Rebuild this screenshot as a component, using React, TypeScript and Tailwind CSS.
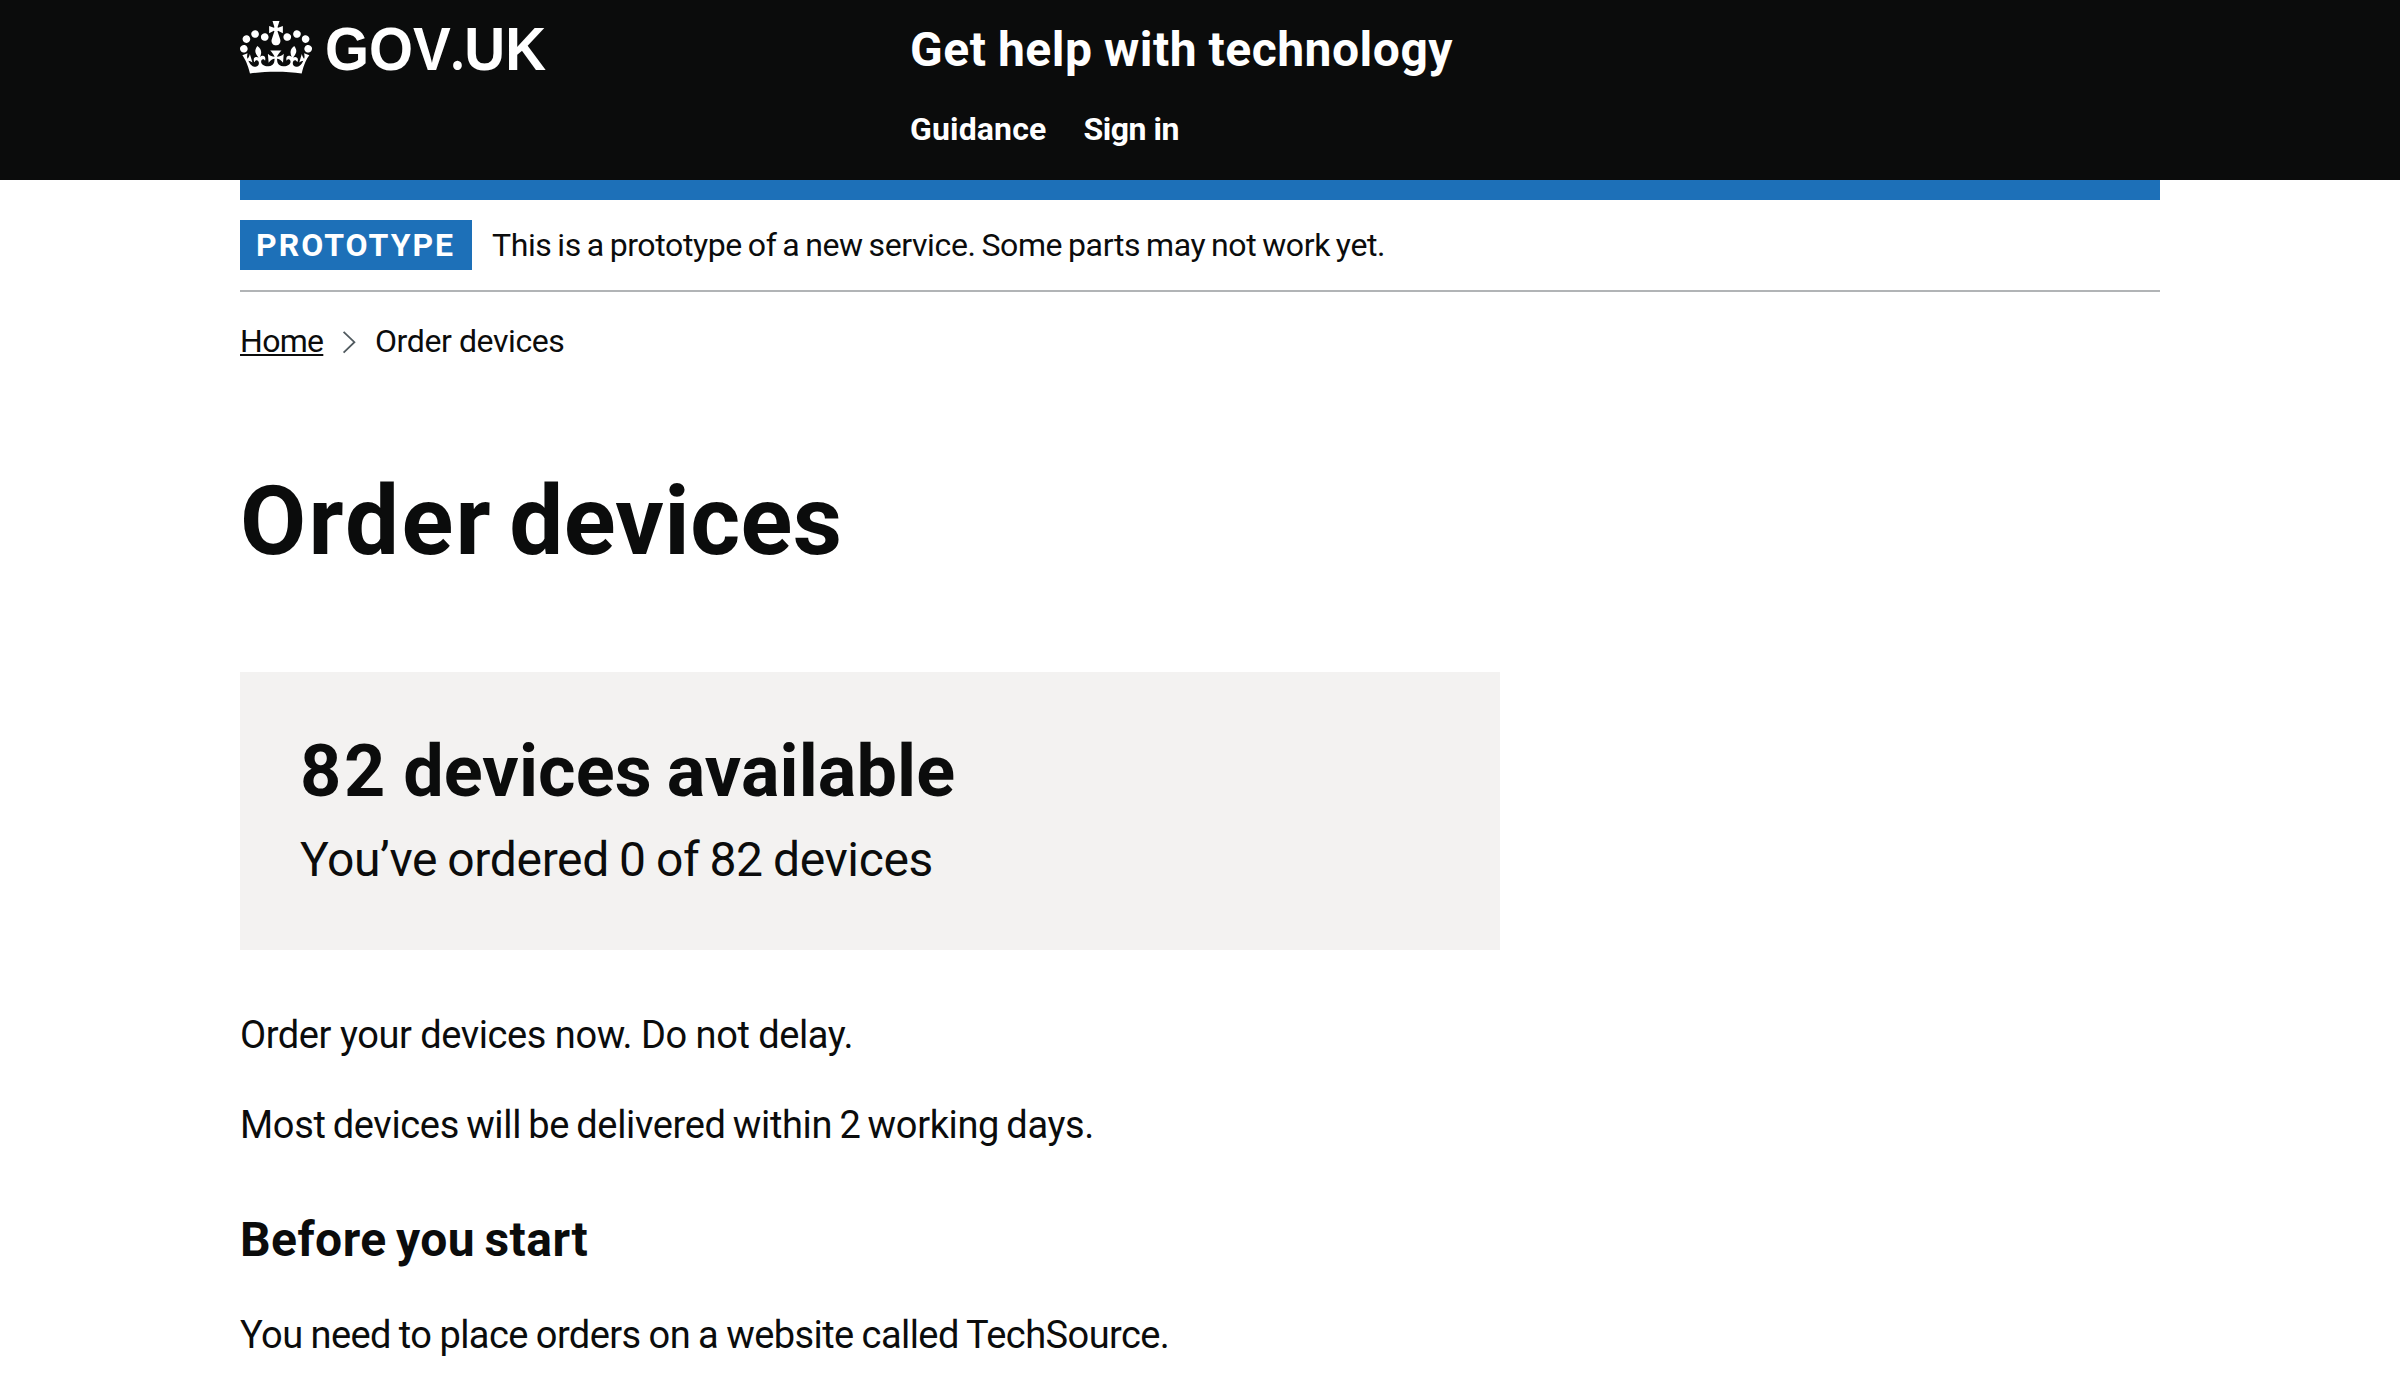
function Crown() {
  return (
    <svg className="mt-[21px] h-[53px] w-[72px] shrink-0" viewBox="0 0 132 97" fill="currentColor" aria-hidden="true">
      <path
        fillRule="evenodd"
        d="M25 30.2c3.5 1.5 7.7-.2 9.1-3.7 1.5-3.6-.2-7.8-3.9-9.2-3.6-1.4-7.6.3-9.1 3.9-1.4 3.5.3 7.5 3.9 9zM9 39.5c3.6 1.5 7.8-.2 9.2-3.7 1.5-3.6-.2-7.8-3.9-9.1-3.6-1.5-7.6.2-9.1 3.8-1.4 3.5.3 7.5 3.8 9zM4.4 57.2c3.5 1.5 7.7-.2 9.1-3.8 1.5-3.6-.2-7.7-3.9-9.1-3.5-1.5-7.6.3-9.1 3.8-1.4 3.5.3 7.6 3.9 9.1zm38.3-21.4c3.5 1.5 7.7-.2 9.1-3.8 1.5-3.6-.2-7.7-3.9-9.1-3.6-1.5-7.6.3-9.1 3.8-1.3 3.6.4 7.7 3.9 9.1zm64.4-5.6c-3.6 1.5-7.8-.2-9.1-3.7-1.5-3.6.2-7.8 3.8-9.2 3.6-1.4 7.7.3 9.2 3.9 1.3 3.5-.4 7.5-3.9 9zm15.9 9.3c-3.6 1.5-7.7-.2-9.1-3.7-1.5-3.6.2-7.8 3.7-9.1 3.6-1.5 7.7.2 9.2 3.8 1.5 3.5-.3 7.5-3.8 9zm4.7 17.7c-3.6 1.5-7.8-.2-9.2-3.8-1.5-3.6.2-7.7 3.9-9.1 3.6-1.5 7.7.3 9.2 3.8 1.3 3.5-.4 7.6-3.9 9.1zM89.3 35.8c-3.6 1.5-7.8-.2-9.2-3.8-1.4-3.6.2-7.7 3.9-9.1 3.6-1.5 7.7.3 9.2 3.8 1.4 3.6-.3 7.7-3.9 9.1zM69.7 17.7l8.9 4.7V9.3l-8.9 2.8c-.2-.3-.5-.6-.9-.9L72.4 0H59.6l3.5 11.2c-.3.3-.6.5-.9.9l-8.8-2.8v13.1l8.8-4.7c.3.3.6.7.9.9l-5 15.4v.1c-.2.8-.4 1.6-.4 2.4 0 4.1 3.1 7.5 7 8.1h.2c.3 0 .7.1 1 .1.4 0 .7 0 1-.1h.2c4-.6 7.1-4.1 7.1-8.1 0-.8-.1-1.7-.4-2.4V34l-5.1-15.4c.4-.2.7-.6 1-.9zM66 92.8c16.9 0 32.8 1.1 47.1 3.2 4-16.9 8.9-26.7 14-33.5l-9.6-3.4c1 4.9 1.1 7.2 0 10.2-1.5-1.4-3-4.3-4.2-8.7L108.6 76c2.8-2 5-3.2 7.5-3.3-4.4 9.4-10 11.9-13.6 11.2-4.3-.8-6.3-4.6-5.6-7.9 1-4.7 5.7-5.9 8-.5 4.3-8.7-3-11.4-7.6-8.8 7.1-7.2 7.9-13.5 2.1-21.1-8 6.1-8.1 12.3-4.5 20.8-4.7-5.4-12.1-2.5-9.5 6.2 3.4-5.2 7.9-2 7.2 3.1-.6 4.3-6.4 7.8-13.5 7.2-10.3-.9-10.9-8-11.2-13.8 2.5-.5 7.1 1.8 11 7.3L80.2 60c-4.1 4.4-8 5.3-12.3 5.4 1.4-4.4 8-11.6 8-11.6H55.5s6.4 7.2 7.9 11.6c-4.2-.1-8-1-12.3-5.4l1.4 16.4c3.9-5.5 8.5-7.7 10.9-7.3-.3 5.8-.9 12.8-11.1 13.8-7.2.6-12.9-2.9-13.5-7.2-.7-5 3.8-8.3 7.1-3.1 2.7-8.7-4.6-11.6-9.4-6.2 3.7-8.5 3.6-14.7-4.6-20.8-5.8 7.6-5 13.9 2.2 21.1-4.7-2.6-11.9.1-7.7 8.8 2.3-5.5 7.1-4.2 8.1.5.7 3.3-1.3 7.1-5.7 7.9-3.5.7-9-1.8-13.5-11.2 2.5.1 4.7 1.3 7.5 3.3l-4.7-15.4c-1.2 4.4-2.7 7.2-4.3 8.7-1.1-3-.9-5.3 0-10.2l-9.5 3.4c5 6.9 9.9 16.7 14 33.5 14.8-2.1 30.8-3.2 47.7-3.2z"
      />
    </svg>
  );
}

function Header() {
  return (
    <header className="h-[180px] bg-[#0b0c0c] px-[240px] text-white">
      <div className="flex">
        <a className="flex w-[670px]">
          <Crown />
          <span className="mt-[17px] ml-[12.5px] inline-block origin-left scale-x-[0.928] font-['Liberation_Sans',sans-serif] text-[61px] leading-[60px] font-bold">
            GOV<span className="font-['Lato',sans-serif]">.</span>UK
          </span>
        </a>
        <div className="pt-5 font-bold">
          <a className="block text-[48px] leading-[60px] tracking-[0.5px] [word-spacing:-0.9px]">Get help with technology</a>
          <nav className="mt-[29px] flex gap-[37px] text-[32px] leading-10">
            <a className="tracking-[0.15px]">Guidance</a>
            <a className="tracking-[-0.47px]">Sign in</a>
          </nav>
        </div>
      </div>
    </header>
  );
}

function PhaseBanner() {
  return (
    <div className="flex border-b-2 border-[#b1b4b6] py-5 text-[32px] leading-[50px]">
      <strong className="w-[232px] bg-[#1d70b8] pl-4 font-bold tracking-[2px] text-white">PROTOTYPE</strong>
      <span className="ml-5 tracking-[-0.38px] [word-spacing:-1.7px]">
        This is a prototype of a new service. Some parts may not work yet.
      </span>
    </div>
  );
}

function Breadcrumbs() {
  return (
    <nav className="mt-[29px] flex text-[32px] leading-10">
      <a className="w-[84px] tracking-[-0.7px] underline decoration-2 underline-offset-2">Home</a>
      <svg className="mt-[10px] ml-[18px] h-[23px] w-[14px]" viewBox="0 0 14 23" fill="none" stroke="#505a5f" strokeWidth="1.8" aria-hidden="true">
        <path d="M1.6.8 12.4 11.2 1.6 21.6" />
      </svg>
      <span className="ml-[19px] tracking-[-0.4px]">Order devices</span>
    </nav>
  );
}

export default function App() {
  return (
    <div className="h-[1394px] overflow-hidden bg-white font-['Roboto',sans-serif] whitespace-nowrap text-[#0b0c0c]">
      <Header />
      <div className="mx-[240px] border-t-[20px] border-[#1d70b8]">
        <PhaseBanner />
        <Breadcrumbs />
        <main className="w-[1260px]">
          <h1 className="mt-[110px] text-[96px] leading-[100px] font-bold tracking-[0.4px] [word-spacing:-8px]">
            <span className="tracking-[2.3px]">Order</span> devices
          </h1>
          <section className="mt-[101px] h-[278px] bg-[#f3f2f1] p-[60px]">
            <h2 className="text-[72px] leading-[80px] font-bold tracking-[0.1px] [word-spacing:-3px]">
              <span className="tracking-[2.8px]">82</span> devices available
            </h2>
            <p className="mt-[18px] text-[48px] leading-[60px] tracking-[-0.34px] [word-spacing:-1.4px]">You’ve ordered 0 of 82 devices</p>
          </section>
          <p className="mt-[60px] text-[38px] leading-[50px] tracking-[-0.41px] [word-spacing:-0.2px]">Order your devices now. Do not delay.</p>
          <p className="mt-10 text-[38px] leading-[50px] tracking-[-0.35px] [word-spacing:-1.84px]">
            Most devices will be delivered within 2 working days.
          </p>
          <h2 className="mt-[60px] text-[48px] leading-[60px] font-bold tracking-[0.45px] [word-spacing:-3px]">Before you start</h2>
          <p className="mt-10 text-[38px] leading-[50px] tracking-[-0.57px] [word-spacing:-0.9px]">
            You need to place orders on a website called TechSource.
          </p>
        </main>
      </div>
    </div>
  );
}
